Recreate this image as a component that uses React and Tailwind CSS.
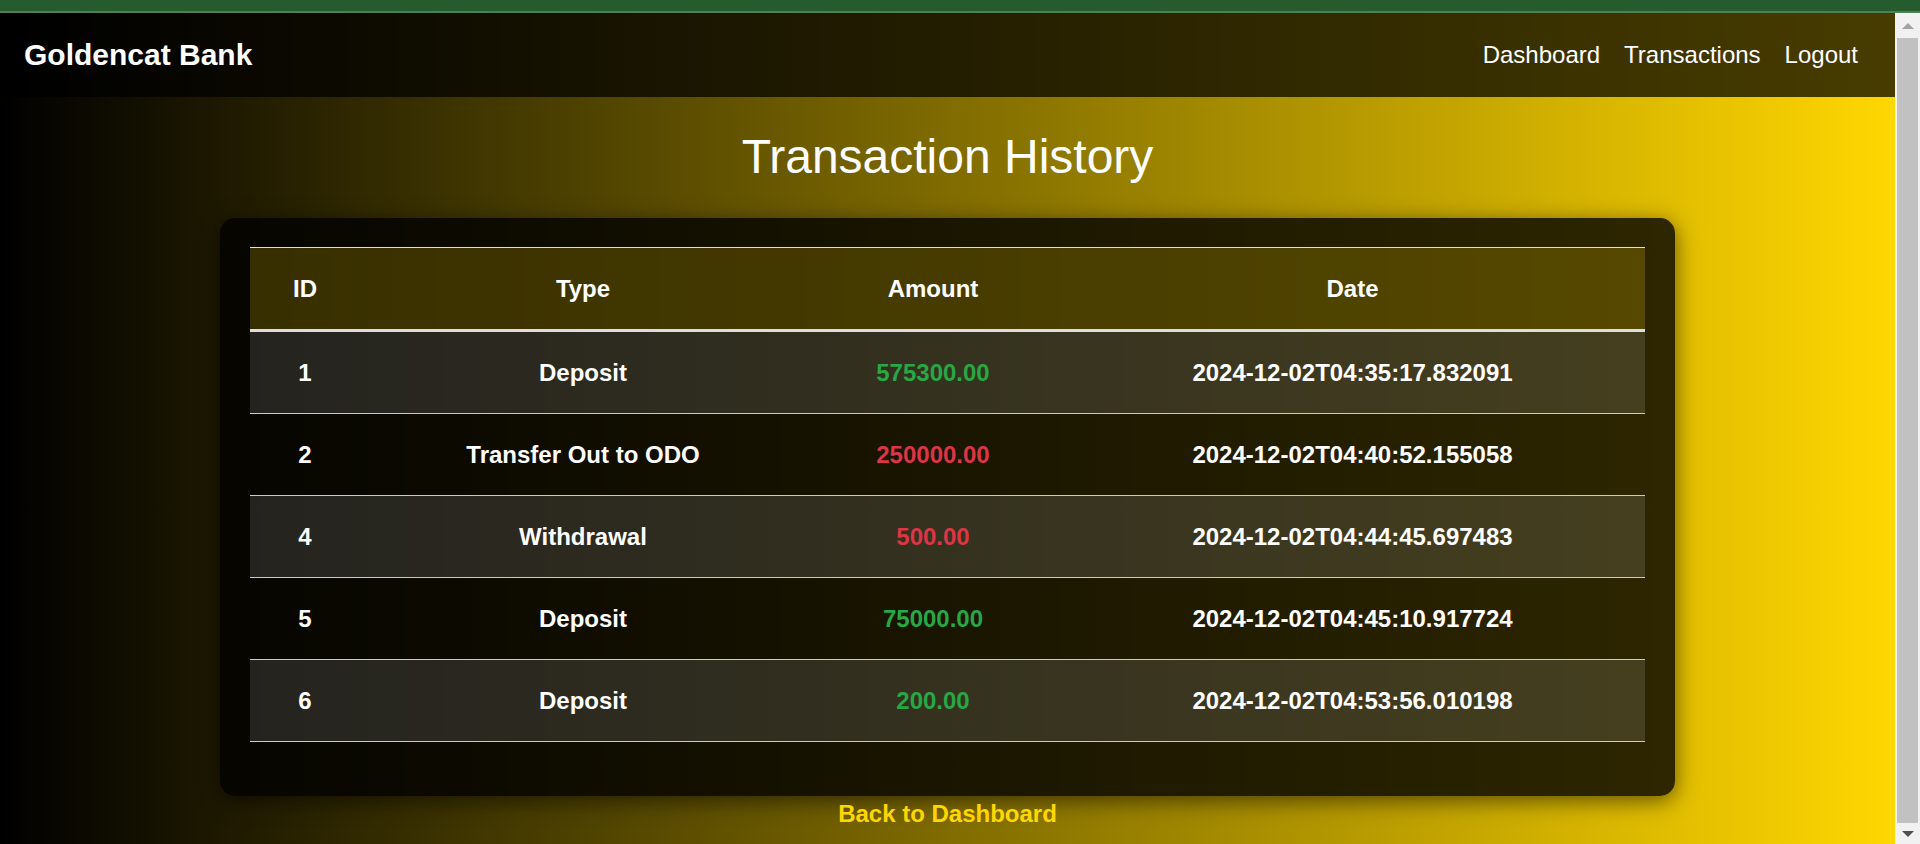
import React from "react";

const rows = [
  { id: 1, type: "Deposit", amount: "575300.00", pos: true, date: "2024-12-02T04:35:17.832091" },
  { id: 2, type: "Transfer Out to ODO", amount: "250000.00", pos: false, date: "2024-12-02T04:40:52.155058" },
  { id: 4, type: "Withdrawal", amount: "500.00", pos: false, date: "2024-12-02T04:44:45.697483" },
  { id: 5, type: "Deposit", amount: "75000.00", pos: true, date: "2024-12-02T04:45:10.917724" },
  { id: 6, type: "Deposit", amount: "200.00", pos: true, date: "2024-12-02T04:53:56.010198" },
];

export default function App() {
  return (
    <div className="flex flex-col h-[844px] overflow-hidden font-['Liberation_Sans',Arial,sans-serif]">
      <div className="h-[11px] bg-[#265b2d] shrink-0" />
      <div className="h-[2px] bg-[#4f7f55] shrink-0" />
      <div className="flex flex-1 min-h-0">
        <div className="flex-1 flex flex-col bg-[linear-gradient(to_right,#000000,#ffd700)]">
          <nav className="h-[84px] shrink-0 bg-[rgba(0,0,0,0.72)] flex items-center justify-between pl-[24px] pr-[37px]">
            <span className="text-[30px] font-bold text-white leading-[34px]">Goldencat Bank</span>
            <div className="flex items-center gap-[24px] text-[24px] text-white leading-[28px]">
              <a>Dashboard</a>
              <a>Transactions</a>
              <a>Logout</a>
            </div>
          </nav>
          <main className="flex flex-col items-center pt-[32px]">
            <h1 className="text-[48px] leading-[55px] text-white font-normal">Transaction History</h1>
            <div className="mt-[34px] w-[1455px] rounded-[15px] bg-[rgba(0,0,0,0.8)] px-[30px] pt-[29px] pb-[54px] shadow-[0_5px_22px_rgba(0,0,0,0.55)]">
              <div className="text-white text-[24px] font-bold leading-[28px]">
                <div className="grid grid-cols-[110px_446px_254px_585px] h-[85px] items-center text-center bg-[rgba(255,215,0,0.2)] border-t border-t-[#dddddd] border-b-[3px] border-b-[#dddddd]">
                  <div>ID</div>
                  <div>Type</div>
                  <div>Amount</div>
                  <div>Date</div>
                </div>
                {rows.map((r, i) => (
                  <div
                    key={r.id}
                    className={
                      "grid grid-cols-[110px_446px_254px_585px] h-[82px] items-center text-center border-b border-b-[#ffd700] " +
                      (i % 2 === 0 ? "bg-[rgba(255,255,255,0.12)]" : "")
                    }
                  >
                    <div>{r.id}</div>
                    <div>{r.type}</div>
                    <div className={r.pos ? "text-[#28a745]" : "text-[#dc3545]"}>{r.amount}</div>
                    <div>{r.date}</div>
                  </div>
                ))}
              </div>
            </div>
            <a className="mt-[4px] text-[24px] leading-[28px] font-bold text-[#ffd700]">Back to Dashboard</a>
          </main>
        </div>
        <div className="w-[25px] shrink-0 bg-[#f1f1f1] flex flex-col items-center">
          <div className="h-[25px] w-full flex items-center justify-center">
            <div className="w-0 h-0 border-l-[6px] border-r-[6px] border-b-[6px] border-l-transparent border-r-transparent border-b-[#a3a3a3]" />
          </div>
          <div className="w-[21px] h-[785px] bg-[#c1c1c1]" />
          <div className="flex-1 w-full flex items-center justify-center">
            <div className="w-0 h-0 border-l-[6px] border-r-[6px] border-t-[6px] border-l-transparent border-r-transparent border-t-[#505050]" />
          </div>
        </div>
      </div>
    </div>
  );
}
